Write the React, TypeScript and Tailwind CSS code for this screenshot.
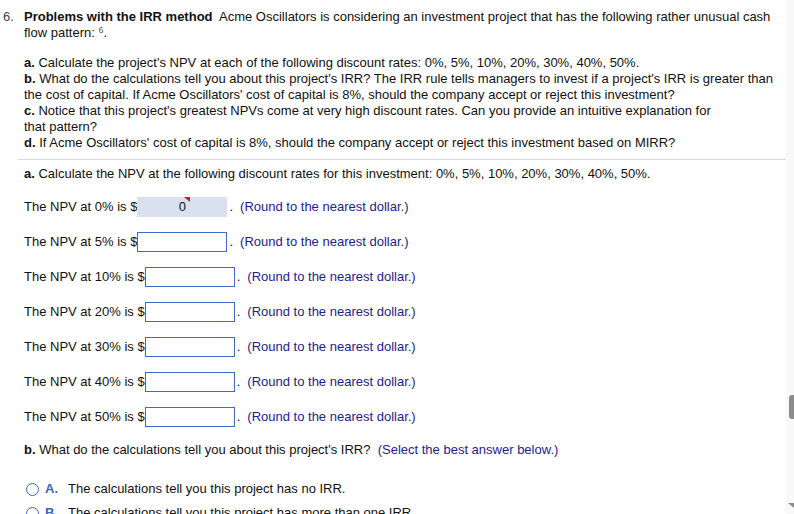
import type { ReactNode } from "react";

const RATES = ["0%", "5%", "10%", "20%", "30%", "40%", "50%"];

function Hint({ children }: { children: ReactNode }) {
  return <span className="text-[#231c8c]">{children}</span>;
}

function NpvRow({ rate, value }: { rate: string; value?: string }) {
  const filled = value !== undefined;
  return (
    <div className="flex h-5 items-center whitespace-nowrap">
      <span>The NPV at {rate} is $</span>
      {filled ? (
        <span className="relative flex h-5 w-[90px] items-center justify-center bg-[#dbe0ef]">
          {value}
          <svg className="absolute left-[47px] top-0" width="6" height="5" viewBox="0 0 6 5">
            <polygon points="0,0 6,0 6,5" fill="#b3262b" />
          </svg>
        </span>
      ) : (
        <span className="h-5 w-[90px] border border-[#4169c8] bg-white" />
      )}
      <span className="ml-[2px]">.</span>
      <span className="ml-[7px]">
        <Hint>(Round to the nearest dollar.)</Hint>
      </span>
    </div>
  );
}

export default function App() {
  return (
    <div className="relative h-[514px] w-[794px] overflow-hidden bg-white font-['Liberation_Sans',Arial,sans-serif] text-[13px] leading-4 text-[#111]">
      <div className="pr-2 pt-[9px]">
        {/* question header */}
        <div className="flex">
          <span className="w-6 pl-[3px] text-[#444]">6.</span>
          <div className="flex-1">
            <p>
              <b>Problems with the IRR method</b>&nbsp; Acme Oscillators is considering an investment project that has the following rather unusual cash
              <br />
              flow pattern: <sup className="text-[9px] text-[#555]">6</sup>.
            </p>
            <p className="mt-[14px]">
              <b>a.</b> Calculate the project's NPV at each of the following discount rates: 0%, 5%, 10%, 20%, 30%, 40%, 50%.
              <br />
              <b>b.</b> What do the calculations tell you about this project's IRR? The IRR rule tells managers to invest if a project's IRR is greater than
              <br />
              the cost of capital. If Acme Oscillators' cost of capital is 8%, should the company accept or reject this investment?
              <br />
              <b>c.</b> Notice that this project's greatest NPVs come at very high discount rates. Can you provide an intuitive explanation for
              <br />
              that pattern?
              <br />
              <b>d.</b> If Acme Oscillators' cost of capital is 8%, should the company accept or reject this investment based on MIRR?
            </p>
          </div>
        </div>

        <div className="ml-[18px] mt-2 border-t border-[#d5d8e0]" />

        {/* part a */}
        <div className="ml-6 mt-[6px] flex flex-col gap-[15px]">
          <p>
            <b>a.</b> Calculate the NPV at the following discount rates for this investment: 0%, 5%, 10%, 20%, 30%, 40%, 50%.
          </p>
          {RATES.map((r, i) => (
            <NpvRow key={r} rate={r} value={i === 0 ? "0" : undefined} />
          ))}
          <p>
            <b>b.</b> What do the calculations tell you about this project's IRR?&nbsp; <Hint>(Select the best answer below.)</Hint>
          </p>
        </div>

        {/* choices */}
        <div className="ml-[26px] mt-[23px] flex flex-col gap-2">
          {[
            ["A.", "The calculations tell you this project has no IRR."],
            ["B.", "The calculations tell you this project has more than one IRR."],
          ].map(([k, t]) => (
            <div key={k} className="flex items-center whitespace-nowrap">
              <span className="h-[13px] w-[13px] rounded-full border border-[#3d63c9]" />
              <b className="ml-[6px] w-[23px] text-[#3d63c9]">{k}</b>
              <span>{t}</span>
            </div>
          ))}
        </div>
      </div>

      {/* scrollbar */}
      <div className="absolute right-0 top-0 h-full w-2 bg-[#f8f8f8]">
        <div className="absolute right-0 top-[395px] h-6 w-[5px] rounded-l-[3px] bg-[#8c8c8c]" />
        <svg className="absolute bottom-[6px] right-0" width="6" height="5" viewBox="0 0 6 5">
          <polygon points="0,0 6,0 6,5" fill="#8c8c8c" />
        </svg>
      </div>
    </div>
  );
}
